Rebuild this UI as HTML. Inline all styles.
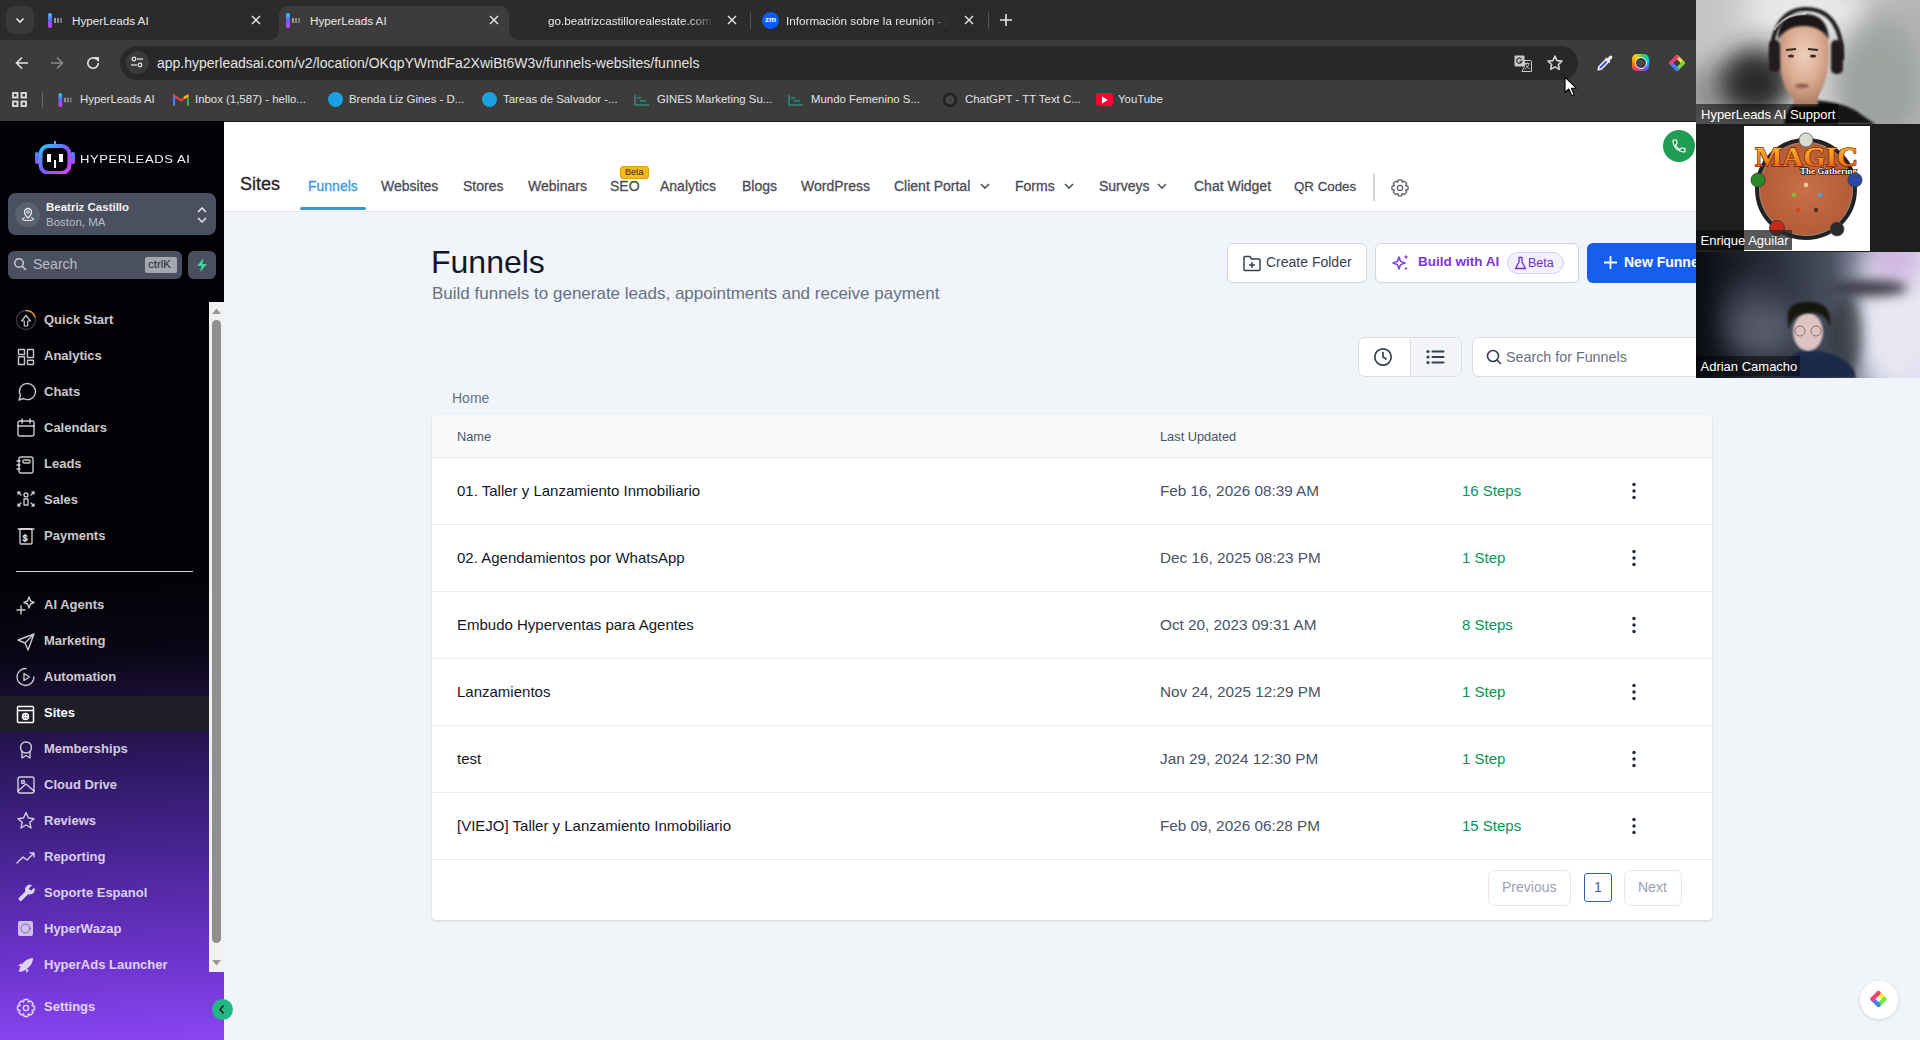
<!DOCTYPE html>
<html><head><meta charset="utf-8">
<style>
*{box-sizing:border-box;margin:0;padding:0}
html,body{width:1920px;height:1040px;overflow:hidden;background:#f1f5f9;font-family:"Liberation Sans",sans-serif}
.a{position:absolute}
.t{position:absolute;white-space:nowrap}
/* chrome */
#strip{position:absolute;left:0;top:0;width:1920px;height:40px;background:#2b2b2b}
#toolbar{position:absolute;left:0;top:40px;width:1920px;height:45px;background:#3c3c3c}
#bm{position:absolute;left:0;top:85px;width:1920px;height:36px;background:#3c3c3c}
.tabtxt{color:#e8e8e8;font-size:11.7px}
.bmt{color:#e3e3e3;font-size:11.4px;top:93px}
/* sidebar */
#side{position:absolute;left:0;top:121px;width:224px;height:919px;
 background:linear-gradient(178deg,#030207 0%,#030207 50%,#0a0616 58%,#1a0f35 63%,#2e1862 70%,#4a2596 80%,#6a32c8 90%,#8a45f2 100%)}
.nav{position:absolute;left:44px;color:rgba(255,255,255,.8);font-size:13px;font-weight:bold;white-space:nowrap}
.ic{position:absolute;left:16px;width:20px;height:20px}
/* header */
#hdr{position:absolute;left:224px;top:121px;width:1472px;height:91px;background:#fff;border-bottom:1px solid #e4e7ec}
.tab{position:absolute;top:178px;font-size:14px;color:#4a4d55;white-space:nowrap;-webkit-text-stroke:0.3px currentColor}
.th{font-size:12.8px;color:#475467}
.rn{font-size:15px;color:#101828}
.rd{font-size:15.3px;color:#475467}
.rs{font-size:15px;color:#079455}
</style></head><body>

<!-- ============ CHROME TAB STRIP ============ -->

<div id="strip"></div>
<!-- dropdown btn -->
<div class="a" style="left:6px;top:6px;width:28px;height:28px;border-radius:8px;background:#383838"></div>
<svg class="a" style="left:14px;top:14px" width="12" height="12" viewBox="0 0 12 12"><path d="M2.5 4.5 L6 8 L9.5 4.5" stroke="#e8e8e8" stroke-width="1.6" fill="none"/></svg>
<!-- tab1 -->
<svg class="a" style="left:47px;top:12px" width="18" height="17" viewBox="0 0 18 17"><defs><linearGradient id="hg" x1="0" y1="0" x2="0" y2="1"><stop offset="0" stop-color="#2ad0ff"/><stop offset=".5" stop-color="#6a5cff"/><stop offset="1" stop-color="#d040ff"/></linearGradient></defs><rect x="1" y="1" width="4" height="15" rx="2" fill="url(#hg)"/><rect x="7" y="6" width="2" height="5" fill="#999"/><rect x="10" y="6" width="2" height="5" fill="#888"/><rect x="13" y="6" width="2" height="5" fill="#777"/></svg>
<div class="t tabtxt" style="left:72px;top:14px">HyperLeads AI</div>
<svg class="a" style="left:251px;top:15px" width="10" height="10" viewBox="0 0 10 10"><path d="M1 1L9 9M9 1L1 9" stroke="#e8e8e8" stroke-width="1.4"/></svg>
<!-- active tab -->
<div class="a" style="left:279px;top:6px;width:230px;height:40px;background:#3c3c3c;border-radius:9px 9px 0 0"></div>
<div class="a" style="left:271px;top:32px;width:8px;height:8px;background:radial-gradient(circle at 0 0,transparent 7.5px,#3c3c3c 8px)"></div><div class="a" style="left:509px;top:32px;width:8px;height:8px;background:radial-gradient(circle at 100% 0,transparent 7.5px,#3c3c3c 8px)"></div>
<svg class="a" style="left:285px;top:12px" width="18" height="17" viewBox="0 0 18 17"><rect x="1" y="1" width="4" height="15" rx="2" fill="url(#hg)"/><rect x="7" y="6" width="2" height="5" fill="#999"/><rect x="10" y="6" width="2" height="5" fill="#888"/><rect x="13" y="6" width="2" height="5" fill="#777"/></svg>
<div class="t tabtxt" style="left:310px;top:14px">HyperLeads AI</div>
<svg class="a" style="left:489px;top:15px" width="10" height="10" viewBox="0 0 10 10"><path d="M1 1L9 9M9 1L1 9" stroke="#e8e8e8" stroke-width="1.4"/></svg>
<!-- tab3 -->
<div class="t tabtxt" style="left:548px;top:14px;width:166px;overflow:hidden;-webkit-mask-image:linear-gradient(90deg,#000 85%,transparent)">go.beatrizcastillorealestate.com</div>
<svg class="a" style="left:727px;top:15px" width="10" height="10" viewBox="0 0 10 10"><path d="M1 1L9 9M9 1L1 9" stroke="#e8e8e8" stroke-width="1.4"/></svg>
<div class="a" style="left:750px;top:12px;width:1px;height:17px;background:#555"></div>
<!-- tab4 zoom -->
<div class="a" style="left:762px;top:12px;width:17px;height:17px;border-radius:50%;background:#0b5cff;color:#fff;font-size:8px;font-weight:bold;line-height:15px;text-align:center">zm</div>
<div class="t tabtxt" style="left:786px;top:14px;width:162px;overflow:hidden;-webkit-mask-image:linear-gradient(90deg,#000 88%,transparent)">Información sobre la reunión - Zoom</div>
<svg class="a" style="left:964px;top:15px" width="10" height="10" viewBox="0 0 10 10"><path d="M1 1L9 9M9 1L1 9" stroke="#e8e8e8" stroke-width="1.4"/></svg>
<div class="a" style="left:988px;top:12px;width:1px;height:17px;background:#555"></div>
<svg class="a" style="left:999px;top:13px" width="14" height="14" viewBox="0 0 14 14"><path d="M7 1V13M1 7H13" stroke="#e8e8e8" stroke-width="1.6"/></svg>

<div id="toolbar"></div>
<!-- nav buttons -->
<svg class="a" style="left:14px;top:55px" width="16" height="16" viewBox="0 0 16 16"><path d="M14 8H2.5M8 2.5L2.5 8L8 13.5" stroke="#e3e3e3" stroke-width="1.6" fill="none"/></svg>
<svg class="a" style="left:49px;top:55px" width="16" height="16" viewBox="0 0 16 16"><path d="M2 8H13.5M8 2.5L13.5 8L8 13.5" stroke="#8a8a8a" stroke-width="1.6" fill="none"/></svg>
<svg class="a" style="left:85px;top:55px" width="16" height="16" viewBox="0 0 16 16"><path d="M13.2 8A5.2 5.2 0 1 1 11.5 4.2" stroke="#e3e3e3" stroke-width="1.6" fill="none"/><path d="M9.5 2.5H13.5V6.5Z" fill="#e3e3e3" stroke="#e3e3e3" stroke-width="1"/></svg>
<!-- omnibox -->
<div class="a" style="left:120px;top:46px;width:1458px;height:34px;border-radius:17px;background:#282828"></div>
<div class="a" style="left:126px;top:51px;width:23px;height:23px;border-radius:50%;background:#3a3a3a"></div>
<svg class="a" style="left:130px;top:55px" width="14" height="14" viewBox="0 0 14 14"><circle cx="4" cy="4" r="1.8" stroke="#e3e3e3" stroke-width="1.3" fill="none"/><path d="M7 4H13" stroke="#e3e3e3" stroke-width="1.3"/><circle cx="10" cy="10" r="1.8" stroke="#e3e3e3" stroke-width="1.3" fill="none"/><path d="M1 10H7" stroke="#e3e3e3" stroke-width="1.3"/></svg>
<div class="t" style="left:157px;top:55px;font-size:14px;color:#e3e3e3">app.hyperleadsai.com/v2/location/OKqpYWmdFa2XwiBt6W3v/funnels-websites/funnels</div>
<!-- translate -->
<svg class="a" style="left:1514px;top:55px" width="18" height="17" viewBox="0 0 18 17"><rect x="0.5" y="0.5" width="10" height="11" rx="1" fill="#c8c8c8"/><path d="M7.5 4.3A2.6 2.6 0 1 0 7.8 6.5H5.6" fill="none" stroke="#3a3a3a" stroke-width="1.3"/><path d="M10.5 5.5H16.5A1 1 0 0 1 17.5 6.5V16.5H8L10.5 11.5Z" fill="#282828" stroke="#c8c8c8" stroke-width="1"/><path d="M11 8.5H15.5M13.2 7.5V9M11.8 9C12.5 11.5 14 13 15.8 14M14.8 9C14.2 11.5 13 13 11.2 14" stroke="#c8c8c8" stroke-width=".9" fill="none"/></svg>
<svg class="a" style="left:1546px;top:54px" width="18" height="18" viewBox="0 0 24 24"><path d="M12 2.8l2.8 6 6.5.7-4.8 4.5 1.3 6.5L12 17.2l-5.8 3.3 1.3-6.5-4.8-4.5 6.5-.7z" stroke="#cfcfcf" stroke-width="2.2" fill="none" stroke-linejoin="round"/></svg>
<!-- extensions -->
<svg class="a" style="left:1596px;top:54px" width="18" height="18" viewBox="0 0 18 18"><path d="M2.2 15.8L3 12.5L10.2 5.3L12.7 7.8L5.5 15Z" fill="#4a4ad0" stroke="#f0f0f0" stroke-width="1.5" stroke-linejoin="round"/><path d="M9.6 4.2L13.8 8.4" stroke="#f0f0f0" stroke-width="2"/><path d="M11.8 6.2L14.8 3.2" stroke="#f0f0f0" stroke-width="3.2" stroke-linecap="round"/></svg>
<div class="a" style="left:1632px;top:54px;width:17px;height:17px;border-radius:5px;background:conic-gradient(from 200deg,#ff2d8a,#ff7a00,#ffd400,#34d058,#00c6ff,#6a4cff,#ff2d8a)"></div>
<div class="a" style="left:1634.5px;top:56.5px;width:12px;height:12px;border-radius:50%;background:#3c3c3c;border:1.3px solid #fff"></div>
<div class="a" style="left:1637.5px;top:59.5px;width:6px;height:6px;border-radius:50%;background:#4a4a4a"></div>
<svg class="a" style="left:1668px;top:54px" width="18" height="18" viewBox="0 0 18 18" stroke-width="3.6" stroke-linecap="round"><path d="M9 2.8L15.2 9" stroke="#e8e040"/><path d="M15.2 9L9 15.2" stroke="#7ad040"/><path d="M9 15.2L2.8 9" stroke="#4a7ef0"/><path d="M2.8 9L9 2.8" stroke="#f04070"/></svg>
<div id="bm"></div>
<svg class="a" style="left:12px;top:92px" width="15" height="15" viewBox="0 0 15 15"><g fill="none" stroke="#e3e3e3" stroke-width="1.8"><rect x="1" y="1" width="4.5" height="4.5"/><rect x="9.5" y="1" width="4.5" height="4.5"/><rect x="1" y="9.5" width="4.5" height="4.5"/><rect x="9.5" y="9.5" width="4.5" height="4.5"/></g></svg>
<div class="a" style="left:42px;top:92px;width:1px;height:16px;background:#6a6a6a"></div>
<svg class="a" style="left:57px;top:92px" width="18" height="16" viewBox="0 0 18 17"><rect x="1" y="1" width="4" height="15" rx="2" fill="url(#hg)"/><rect x="7" y="6" width="2" height="5" fill="#999"/><rect x="10" y="6" width="2" height="5" fill="#888"/><rect x="13" y="6" width="2" height="5" fill="#777"/></svg>
<div class="t bmt" style="left:80px">HyperLeads AI</div>
<svg class="a" style="left:173px;top:93px" width="16" height="13" viewBox="0 0 16 12"><path d="M1 12V2L8 7L15 2V12" fill="none" stroke="#ea4335" stroke-width="2.2"/><path d="M1 12V3" stroke="#4285f4" stroke-width="2.2"/><path d="M15 12V3" stroke="#34a853" stroke-width="2.2"/><path d="M11 4.5L15 2" stroke="#fbbc04" stroke-width="2.2"/></svg>
<div class="t bmt" style="left:195px">Inbox (1,587) - hello...</div>
<div class="a" style="left:328px;top:92px;width:15px;height:15px;border-radius:50%;background:#1ba1e2"></div>
<div class="t bmt" style="left:349px">Brenda Liz Gines - D...</div>
<div class="a" style="left:482px;top:92px;width:15px;height:15px;border-radius:50%;background:#1ba1e2"></div>
<div class="t bmt" style="left:503px">Tareas de Salvador -...</div>
<svg class="a" style="left:634px;top:94px" width="16" height="12" viewBox="0 0 16 12"><path d="M1 1V11H15M3 4H7M6 7H12" stroke="#2e8b7a" stroke-width="1.5" fill="none"/></svg>
<div class="t bmt" style="left:657px">GINES Marketing Su...</div>
<svg class="a" style="left:788px;top:94px" width="16" height="12" viewBox="0 0 16 12"><path d="M1 1V11H15M3 4H7M6 7H12" stroke="#2e8b7a" stroke-width="1.5" fill="none"/></svg>
<div class="t bmt" style="left:811px">Mundo Femenino S...</div>
<svg class="a" style="left:942px;top:92px" width="16" height="16" viewBox="0 0 16 16"><circle cx="8" cy="8" r="6" fill="none" stroke="#222" stroke-width="2.5"/><circle cx="8" cy="8" r="3" fill="none" stroke="#555" stroke-width="1"/></svg>
<div class="t bmt" style="left:965px">ChatGPT - TT Text C...</div>
<div class="a" style="left:1096px;top:93px;width:17px;height:13px;border-radius:3px;background:#ff0033"></div>
<svg class="a" style="left:1101px;top:96px" width="8" height="8" viewBox="0 0 8 8"><path d="M1 0.5L7 4L1 7.5Z" fill="#fff"/></svg>
<div class="t bmt" style="left:1118px">YouTube</div>


<!-- ============ SIDEBAR ============ -->

<div id="side"></div>
<!-- logo -->
<svg class="a" style="left:34px;top:141px" width="42" height="33" viewBox="0 0 42 33"><defs><linearGradient id="lg" x1="0" y1="0" x2="1" y2="1"><stop offset="0" stop-color="#28c8ff"/><stop offset=".5" stop-color="#7a5cff"/><stop offset="1" stop-color="#e040ff"/></linearGradient></defs>
<rect x="20" y="0" width="2" height="5" fill="#4aa8ff"/><rect x="1" y="11" width="4" height="12" rx="2" fill="url(#lg)"/><rect x="37" y="11" width="4" height="12" rx="2" fill="url(#lg)"/>
<rect x="6.5" y="5" width="29" height="27" rx="8" fill="none" stroke="url(#lg)" stroke-width="4"/>
<rect x="13" y="13" width="4" height="8" fill="#fff"/><rect x="25" y="13" width="4" height="8" fill="#fff"/><rect x="20" y="19" width="2" height="8" fill="#fff"/></svg>
<div class="t" style="left:80px;top:151px;font-size:13px;letter-spacing:0.6px;color:#f0f0f0;font-weight:normal;transform:scaleY(0.9)">HYPERLEADS AI</div>
<!-- location switcher -->
<div class="a" style="left:8px;top:193px;width:208px;height:42px;border-radius:8px;background:#4a5060"></div>
<div class="a" style="left:15px;top:202px;width:25px;height:25px;border-radius:50%;background:#5b6170"></div>
<svg class="a" style="left:20px;top:206px" width="16" height="16" viewBox="0 0 16 16"><path d="M8 12C8 12 4.5 8.5 4.5 6A3.5 3.5 0 0 1 11.5 6C11.5 8.5 8 12 8 12Z" fill="none" stroke="#e5e7eb" stroke-width="1.3"/><circle cx="8" cy="6" r="1.2" fill="none" stroke="#e5e7eb" stroke-width="1.1"/><path d="M5 11.5C3 12 2.5 12.6 2.5 13C2.5 14 5 14.5 8 14.5S13.5 14 13.5 13C13.5 12.6 13 12 11 11.5" fill="none" stroke="#e5e7eb" stroke-width="1.2"/></svg>
<div class="t" style="left:46px;top:201px;font-size:11.5px;font-weight:bold;color:#f3f4f6">Beatriz Castillo</div>
<div class="t" style="left:46px;top:216px;font-size:11.5px;color:#b9bdc6">Boston, MA</div>
<svg class="a" style="left:196px;top:205px" width="12" height="20" viewBox="0 0 12 20"><path d="M2 7L6 3L10 7M2 13L6 17L10 13" stroke="#e5e7eb" stroke-width="1.5" fill="none"/></svg>
<!-- search -->
<div class="a" style="left:8px;top:251px;width:174px;height:28px;border-radius:6px;background:#4a5060"></div>
<svg class="a" style="left:13px;top:257px" width="15" height="15" viewBox="0 0 15 15"><circle cx="6" cy="6" r="4.3" fill="none" stroke="#c9ccd3" stroke-width="1.5"/><path d="M9.2 9.2L13 13" stroke="#c9ccd3" stroke-width="1.6"/></svg>
<div class="t" style="left:33px;top:256px;font-size:14px;color:#b9bdc6">Search</div>
<div class="a" style="left:145px;top:257px;width:32px;height:16px;border-radius:2px;background:#a4a8b0"></div>
<div class="t" style="left:148px;top:258px;font-size:11.5px;color:#1f2937">ctrlK</div>
<div class="a" style="left:188px;top:251px;width:28px;height:28px;border-radius:6px;background:#4a5060"></div>
<svg class="a" style="left:195px;top:257px" width="14" height="16" viewBox="0 0 14 16"><path d="M8.5 1L2 9H6.5L5 15L12 7H7.5Z" fill="#37d69a"/></svg>
<!-- scrollbar -->
<div class="a" style="left:209px;top:302px;width:15px;height:670px;background:#f1f1f1"></div>
<div class="a" style="left:212px;top:320px;width:9px;height:623px;border-radius:5px;background:#8f8f8f"></div>
<svg class="a" style="left:211px;top:307px" width="11" height="8" viewBox="0 0 11 8"><path d="M1 7L5.5 1.5L10 7Z" fill="#9a9a9a"/></svg>
<svg class="a" style="left:211px;top:959px" width="11" height="8" viewBox="0 0 11 8"><path d="M1 1L5.5 6.5L10 1Z" fill="#9a9a9a"/></svg>
<!-- active band -->
<div class="a" style="left:0;top:696px;width:209px;height:35px;background:#1d1e26"></div>
<!-- divider -->
<div class="a" style="left:16px;top:571px;width:177px;height:1px;background:#d8d8d8"></div>
<!-- nav items -->
<div class="nav" style="top:312px">Quick Start</div>
<div class="nav" style="top:348px">Analytics</div>
<div class="nav" style="top:384px">Chats</div>
<div class="nav" style="top:420px">Calendars</div>
<div class="nav" style="top:456px">Leads</div>
<div class="nav" style="top:492px">Sales</div>
<div class="nav" style="top:528px">Payments</div>
<div class="nav" style="top:597px">AI Agents</div>
<div class="nav" style="top:633px">Marketing</div>
<div class="nav" style="top:669px">Automation</div>
<div class="nav" style="top:705px;color:#fff">Sites</div>
<div class="nav" style="top:741px">Memberships</div>
<div class="nav" style="top:777px">Cloud Drive</div>
<div class="nav" style="top:813px">Reviews</div>
<div class="nav" style="top:849px">Reporting</div>
<div class="nav" style="top:885px">Soporte Espanol</div>
<div class="nav" style="top:921px">HyperWazap</div>
<div class="nav" style="top:957px">HyperAds Launcher</div>
<div class="nav" style="top:999px">Settings</div>
<!-- nav icons -->
<svg class="a" style="left:0;top:300px" width="44" height="740" viewBox="0 300 44 740" fill="none" stroke="rgba(255,255,255,.78)" stroke-width="1.4" stroke-linecap="round" stroke-linejoin="round">
 <!-- quick start -->
 <circle cx="26" cy="320" r="9.5" stroke="#3a3a3a"/><path d="M26 310.5A9.5 9.5 0 0 1 35 317" stroke="#e08a3a"/><path d="M24.3 326V321H21.5L26 315.5L30.5 321H27.7V326Z" stroke-width="1.2"/>
 <!-- analytics -->
 <rect x="18.5" y="349.5" width="6" height="5" rx=".3"/><rect x="27.5" y="349.5" width="6" height="8" rx=".3"/><rect x="18.5" y="356.8" width="6" height="7.7" rx=".3"/><rect x="27.5" y="360.3" width="6" height="4.2" rx=".3"/>
 <!-- chats -->
 <path d="M19 400L20.5 395.5A8 8 0 1 1 23.5 398.5Z"/>
 <!-- calendars -->
 <rect x="18" y="421" width="16" height="15" rx="2"/><path d="M18 426H34M22 419V423M30 419V423"/>
 <!-- leads -->
 <rect x="19" y="457" width="14" height="16" rx="2"/><rect x="23" y="460" width="7" height="3" rx="1"/><path d="M17 461H20M17 465H20M17 469H20"/>
 <!-- sales -->
 <circle cx="26" cy="495" r="2"/><path d="M24 499H28V505H24Z"/><path d="M18 494V492H20M34 494V492H32M18 504V506H20M34 504V506H32M19 493L21 495M33 493L31 495M19 505L21 503M33 505L31 503"/>
 <!-- payments -->
 <path d="M18 529H34"/><rect x="20" y="529" width="12" height="15" rx="1"/><text x="22.5" y="541" font-size="9" stroke-width=".5" fill="rgba(255,255,255,.78)" font-family="Liberation Sans">$</text>
 <!-- ai agents -->
 <path d="M29 597L30.5 601L34 602.5L30.5 604L29 608L27.5 604L24 602.5L27.5 601Z"/><path d="M21 606V614M17 610H25"/>
 <!-- marketing -->
 <path d="M18 640L34 634L28 650L25 643Z M25 643L34 634"/>
 <!-- automation -->
 <path d="M34 677A8.5 8.5 0 1 1 26 668.5"/><path d="M24 673.5L29.5 677L24 680.5Z"/>
 <!-- memberships -->
 <path d="M26 742A5.5 5.5 0 1 1 26 753A5.5 5.5 0 1 1 26 742Z"/><path d="M22 752L22 758L26 755.5L30 758L30 752"/>
 <!-- cloud drive -->
 <rect x="18" y="777" width="16" height="16" rx="2"/><circle cx="23" cy="782" r="1.5"/><path d="M18 791L26 784L34 791"/>
 <!-- reviews -->
 <path d="M26 812.5L28.5 818L34 818.6L29.8 822.3L31 828L26 825L21 828L22.2 822.3L18 818.6L23.5 818Z"/>
 <!-- reporting -->
 <path d="M17 863L23 857L27 860L34 853M30 853H34V857"/>
 <!-- soporte (wrench) -->
 <g transform="translate(35.5 884) scale(-0.75 0.75)"><path d="M22.7 19l-9.1-9.1c.9-2.3.4-5-1.5-6.9-2-2-5-2.4-7.4-1.3L9 6 6 9 1.6 4.7C.4 7.1.9 10.1 2.9 12.1c1.9 1.9 4.6 2.4 6.9 1.5l9.1 9.1c.4.4 1 .4 1.4 0l2.3-2.3c.5-.4.5-1.1.1-1.4z" fill="rgba(255,255,255,.8)" stroke="none" transform="rotate(0)"/></g>
 <!-- hyperwazap -->
 <rect x="18" y="921" width="15" height="15" rx="2" fill="rgba(255,255,255,.7)" stroke="none"/><circle cx="25.5" cy="928.5" r="4.5" stroke="rgba(90,40,180,.6)" stroke-width="1"/>
 <!-- rocket -->
 <path d="M19 972C19 968 22 964 24 962C27 959 31 958 33 958C33 961 32 964 29 967C27 969 23 972 19 972Z" fill="rgba(255,255,255,.78)" stroke="none"/><path d="M22 966L18 966L21 963M26 969L26 973L29 970" fill="rgba(255,255,255,.78)" stroke="none"/>
 <!-- settings -->
 <circle cx="26" cy="1008" r="2.6"/><path d="M24.2 999.5H27.8L28.4 1002L30.6 1000.9L33.1 1003.4L32 1005.6L34.5 1006.2V1009.8L32 1010.4L33.1 1012.6L30.6 1015.1L28.4 1014L27.8 1016.5H24.2L23.6 1014L21.4 1015.1L18.9 1012.6L20 1010.4L17.5 1009.8V1006.2L20 1005.6L18.9 1003.4L21.4 1000.9L23.6 1002Z"/>
</svg>
<!-- sites icon white -->
<svg class="a" style="left:16px;top:705px" width="20" height="20" viewBox="0 0 20 20" fill="none" stroke="#fff" stroke-width="1.5"><rect x="1.5" y="1.5" width="16" height="16" rx="1"/><path d="M1.5 5.5H17.5"/><circle cx="9.5" cy="11.5" r="3"/><path d="M6.5 11.5H12.5M9.5 8.5V14.5"/></svg>
<!-- collapse btn -->
<div class="a" style="left:212px;top:999px;width:21px;height:21px;border-radius:50%;background:#23b883"></div>
<svg class="a" style="left:217px;top:1004px" width="10" height="11" viewBox="0 0 10 11"><path d="M6.5 1.5L3 5.5L6.5 9.5" stroke="#1a1a1a" stroke-width="1.5" fill="none"/></svg>


<!-- ============ HEADER ============ -->

<div id="hdr"></div>
<div class="a" style="left:224px;top:121px;width:1472px;height:1px;background:#1a1a1a"></div>
<div class="t" style="left:240px;top:174px;font-size:18px;color:#1f2328;-webkit-text-stroke:0.3px currentColor">Sites</div>
<div class="tab" style="left:308px;color:#3b9ad6">Funnels</div>
<div class="a" style="left:300px;top:207px;width:66px;height:3px;border-radius:2px;background:#3b95cf"></div>
<div class="tab" style="left:381px">Websites</div>
<div class="tab" style="left:463px">Stores</div>
<div class="tab" style="left:528px">Webinars</div>
<div class="tab" style="left:610px">SEO</div>
<div class="a" style="left:620px;top:166px;width:29px;height:13px;border-radius:3px;background:#f8b820;border:1px solid #e59c00"></div>
<div class="t" style="left:625px;top:166.5px;font-size:9px;color:#3a2a00">Beta</div>
<div class="tab" style="left:660px">Analytics</div>
<div class="tab" style="left:742px">Blogs</div>
<div class="tab" style="left:801px">WordPress</div>
<div class="tab" style="left:894px">Client Portal</div>
<svg class="a" style="left:979px;top:180px" width="12" height="12" viewBox="0 0 12 12"><path d="M2 4L6 8L10 4" stroke="#4b5563" stroke-width="1.6" fill="none"/></svg>
<div class="tab" style="left:1015px">Forms</div>
<svg class="a" style="left:1063px;top:180px" width="12" height="12" viewBox="0 0 12 12"><path d="M2 4L6 8L10 4" stroke="#4b5563" stroke-width="1.6" fill="none"/></svg>
<div class="tab" style="left:1099px">Surveys</div>
<svg class="a" style="left:1156px;top:180px" width="12" height="12" viewBox="0 0 12 12"><path d="M2 4L6 8L10 4" stroke="#4b5563" stroke-width="1.6" fill="none"/></svg>
<div class="tab" style="left:1194px">Chat Widget</div>
<div class="tab" style="left:1294px;font-size:13.3px;top:178.5px">QR Codes</div>
<div class="a" style="left:1373px;top:173px;width:1.5px;height:28px;background:#d4d4d4"></div>
<svg class="a" style="left:1389.5px;top:177.5px" width="20" height="20" viewBox="0 0 20 20" fill="none" stroke="#5a5d63" stroke-width="1.3" stroke-linejoin="round"><circle cx="10" cy="10" r="2.6"/><path d="M8.3 1.8H11.7L12.2 4.1L14.3 3.1L16.7 5.5L15.7 7.6L18 8.1V11.5L15.7 12L16.7 14.1L14.3 16.5L12.2 15.5L11.7 17.8H8.3L7.8 15.5L5.7 16.5L3.3 14.1L4.3 12L2 11.5V8.1L4.3 7.6L3.3 5.5L5.7 3.1L7.8 4.1Z"/></svg>
<!-- phone -->
<div class="a" style="left:1663px;top:130px;width:32px;height:32px;border-radius:50%;background:#1f9d55"></div>
<svg class="a" style="left:1671px;top:138px" width="16" height="16" viewBox="0 0 24 24"><path d="M6.6 10.8c1.4 2.8 3.8 5.1 6.6 6.6l2.2-2.2c.3-.3.7-.4 1-.2 1.1.4 2.3.6 3.6.6.6 0 1 .4 1 1V20c0 .6-.4 1-1 1C10.6 21 3 13.4 3 4c0-.6.4-1 1-1h3.5c.6 0 1 .4 1 1 0 1.3.2 2.5.6 3.6.1.3 0 .7-.2 1z" fill="none" stroke="#fff" stroke-width="1.8"/></svg>

<!-- ============ CONTENT ============ -->
<div class="t" style="left:431px;top:244px;font-size:32px;color:#101828">Funnels</div>
<div class="t" style="left:432px;top:284px;font-size:17px;color:#667085">Build funnels to generate leads, appointments and receive payment</div>
<!-- create folder -->
<div class="a" style="left:1227px;top:243px;width:140px;height:40px;border-radius:6px;background:#fff;border:1px solid #d0d5dd"></div>
<svg class="a" style="left:1242px;top:253px" width="20" height="20" viewBox="0 0 20 20" fill="none" stroke="#344054" stroke-width="1.5" stroke-linejoin="round"><path d="M2 5V16.5A1 1 0 0 0 3 17.5H17A1 1 0 0 0 18 16.5V7A1 1 0 0 0 17 6H9.5L8 3.5H3A1 1 0 0 0 2 4.5Z"/><path d="M10 9V15M7 12H13"/></svg>
<div class="t" style="left:1266px;top:254px;font-size:14px;color:#344054">Create Folder</div>
<!-- build with ai -->
<div class="a" style="left:1375px;top:243px;width:204px;height:40px;border-radius:6px;background:#fff;border:1px solid #d0d5dd"></div>
<svg class="a" style="left:1390px;top:252px" width="22" height="22" viewBox="0 0 22 22" fill="none" stroke="#7f3ee0" stroke-width="1.5" stroke-linejoin="round"><path d="M9 5L10.6 9.4L15 11L10.6 12.6L9 17L7.4 12.6L3 11L7.4 9.4Z"/><path d="M16 2.5L16.7 4.3L18.5 5L16.7 5.7L16 7.5L15.3 5.7L13.5 5L15.3 4.3Z" fill="#7f3ee0" stroke="none"/><path d="M16 14.5L16.6 16L18 16.5L16.6 17L16 18.5L15.4 17L14 16.5L15.4 16Z" fill="#7f3ee0" stroke="none"/></svg>
<div class="t" style="left:1418px;top:254px;font-size:13.5px;font-weight:bold;color:#7b35d9">Build with AI</div>
<div class="a" style="left:1507px;top:252px;width:57px;height:22px;border-radius:11px;background:#f4f0fd;border:1px solid #d9ccf5"></div>
<svg class="a" style="left:1514px;top:256px" width="13" height="14" viewBox="0 0 13 14" fill="none" stroke="#6b2fd0" stroke-width="1.3" stroke-linejoin="round"><path d="M4.5 1.5H8.5M5 1.5V6L1.5 12.5H11.5L8 6V1.5"/></svg>
<div class="t" style="left:1528px;top:256px;font-size:12.5px;color:#6b2fd0">Beta</div>
<!-- new funnel -->
<div class="a" style="left:1587px;top:243px;width:140px;height:40px;border-radius:6px;background:#155eef"></div>
<svg class="a" style="left:1602px;top:254px" width="17" height="17" viewBox="0 0 17 17"><path d="M8.5 2V15M2 8.5H15" stroke="#fff" stroke-width="1.8"/></svg>
<div class="t" style="left:1624px;top:254px;font-size:14px;font-weight:bold;color:#fff">New Funnel</div>
<!-- view toggle -->
<div class="a" style="left:1358px;top:337px;width:104px;height:40px;border-radius:7px;background:#fff;border:1px solid #d9dde3;overflow:hidden"><div class="a" style="left:51px;top:0;width:53px;height:40px;background:#f2f4f7;border-left:1px solid #d9dde3"></div></div>
<svg class="a" style="left:1373px;top:347px" width="20" height="20" viewBox="0 0 20 20" fill="none" stroke="#344054" stroke-width="1.7" stroke-linecap="round"><circle cx="10" cy="10" r="8.2"/><path d="M10 5.5V10L13 12"/></svg>
<svg class="a" style="left:1426px;top:349px" width="19" height="16" viewBox="0 0 19 16"><g fill="#344054"><circle cx="2" cy="2.5" r="1.6"/><circle cx="2" cy="8" r="1.6"/><circle cx="2" cy="13.5" r="1.6"/><rect x="5.5" y="1.6" width="13" height="1.8" rx=".9"/><rect x="5.5" y="7.1" width="13" height="1.8" rx=".9"/><rect x="5.5" y="12.6" width="13" height="1.8" rx=".9"/></g></svg>
<!-- search funnels -->
<div class="a" style="left:1472px;top:337px;width:260px;height:40px;border-radius:7px;background:#fff;border:1px solid #d9dde3"></div>
<svg class="a" style="left:1486px;top:349px" width="16" height="16" viewBox="0 0 16 16" fill="none" stroke="#344054" stroke-width="1.6" stroke-linecap="round"><circle cx="7" cy="7" r="5.5"/><path d="M11 11L14.5 14.5"/></svg>
<div class="t" style="left:1506px;top:349px;font-size:14.3px;color:#667085">Search for Funnels</div>
<!-- breadcrumb -->
<div class="t" style="left:452px;top:390px;font-size:14px;color:#667085">Home</div>
<!-- table card -->
<div class="a" style="left:432px;top:415px;width:1280px;height:505px;border-radius:4px;background:#fff;box-shadow:0 1px 3px rgba(16,24,40,.1),0 1px 2px rgba(16,24,40,.06);overflow:hidden">
 <div class="a" style="left:0;top:0;width:1280px;height:43px;background:#f9fafb;border-bottom:1px solid #eaecf0"></div>
 <div class="a" style="left:0;top:109px;width:1280px;height:1px;background:#eaecf0"></div>
 <div class="a" style="left:0;top:176px;width:1280px;height:1px;background:#eaecf0"></div>
 <div class="a" style="left:0;top:243px;width:1280px;height:1px;background:#eaecf0"></div>
 <div class="a" style="left:0;top:310px;width:1280px;height:1px;background:#eaecf0"></div>
 <div class="a" style="left:0;top:377px;width:1280px;height:1px;background:#eaecf0"></div>
 <div class="a" style="left:0;top:444px;width:1280px;height:1px;background:#eaecf0"></div>
</div>
<div class="t th" style="left:457px;top:429px">Name</div>
<div class="t th" style="left:1160px;top:429px">Last Updated</div>
<div class="t rn" style="left:457px;top:482px">01. Taller y Lanzamiento Inmobiliario</div>
<div class="t rd" style="left:1160px;top:482px">Feb 16, 2026 08:39 AM</div>
<div class="t rs" style="left:1462px;top:482px">16 Steps</div>
<svg class="a" style="left:1630px;top:482px" width="8" height="18" viewBox="0 0 8 18"><g fill="#1d2939"><circle cx="4" cy="2.5" r="1.7"/><circle cx="4" cy="9" r="1.7"/><circle cx="4" cy="15.5" r="1.7"/></g></svg>
<div class="t rn" style="left:457px;top:549px">02. Agendamientos por WhatsApp</div>
<div class="t rd" style="left:1160px;top:549px">Dec 16, 2025 08:23 PM</div>
<div class="t rs" style="left:1462px;top:549px">1 Step</div>
<svg class="a" style="left:1630px;top:549px" width="8" height="18" viewBox="0 0 8 18"><g fill="#1d2939"><circle cx="4" cy="2.5" r="1.7"/><circle cx="4" cy="9" r="1.7"/><circle cx="4" cy="15.5" r="1.7"/></g></svg>
<div class="t rn" style="left:457px;top:616px">Embudo Hyperventas para Agentes</div>
<div class="t rd" style="left:1160px;top:616px">Oct 20, 2023 09:31 AM</div>
<div class="t rs" style="left:1462px;top:616px">8 Steps</div>
<svg class="a" style="left:1630px;top:616px" width="8" height="18" viewBox="0 0 8 18"><g fill="#1d2939"><circle cx="4" cy="2.5" r="1.7"/><circle cx="4" cy="9" r="1.7"/><circle cx="4" cy="15.5" r="1.7"/></g></svg>
<div class="t rn" style="left:457px;top:683px">Lanzamientos</div>
<div class="t rd" style="left:1160px;top:683px">Nov 24, 2025 12:29 PM</div>
<div class="t rs" style="left:1462px;top:683px">1 Step</div>
<svg class="a" style="left:1630px;top:683px" width="8" height="18" viewBox="0 0 8 18"><g fill="#1d2939"><circle cx="4" cy="2.5" r="1.7"/><circle cx="4" cy="9" r="1.7"/><circle cx="4" cy="15.5" r="1.7"/></g></svg>
<div class="t rn" style="left:457px;top:750px">test</div>
<div class="t rd" style="left:1160px;top:750px">Jan 29, 2024 12:30 PM</div>
<div class="t rs" style="left:1462px;top:750px">1 Step</div>
<svg class="a" style="left:1630px;top:750px" width="8" height="18" viewBox="0 0 8 18"><g fill="#1d2939"><circle cx="4" cy="2.5" r="1.7"/><circle cx="4" cy="9" r="1.7"/><circle cx="4" cy="15.5" r="1.7"/></g></svg>
<div class="t rn" style="left:457px;top:817px">[VIEJO] Taller y Lanzamiento Inmobiliario</div>
<div class="t rd" style="left:1160px;top:817px">Feb 09, 2026 06:28 PM</div>
<div class="t rs" style="left:1462px;top:817px">15 Steps</div>
<svg class="a" style="left:1630px;top:817px" width="8" height="18" viewBox="0 0 8 18"><g fill="#1d2939"><circle cx="4" cy="2.5" r="1.7"/><circle cx="4" cy="9" r="1.7"/><circle cx="4" cy="15.5" r="1.7"/></g></svg>

<!-- pagination -->
<div class="a" style="left:1488px;top:870px;width:83px;height:36px;border-radius:6px;border:1px solid #e4e7ec;background:#fff"></div>
<div class="t" style="left:1502px;top:879px;font-size:14px;color:#98a2b3">Previous</div>
<div class="a" style="left:1584px;top:873px;width:28px;height:29px;border-radius:3px;border:1.5px solid #2f5fb3;background:#fff"></div>
<div class="t" style="left:1594px;top:879px;font-size:14px;color:#2f5fb3">1</div>
<div class="a" style="left:1624px;top:870px;width:58px;height:36px;border-radius:6px;border:1px solid #e4e7ec;background:#fff"></div>
<div class="t" style="left:1638px;top:879px;font-size:14px;color:#98a2b3">Next</div>
<!-- floating -->
<div class="a" style="left:1860px;top:981px;width:38px;height:38px;border-radius:50%;background:#fff;box-shadow:0 1px 4px rgba(0,0,0,.12)"></div>
<svg class="a" style="left:1867px;top:988px" width="24" height="24" viewBox="0 0 24 24" stroke-width="4.2" stroke-linecap="round"><path d="M11.5 5L17.5 11" stroke="#f5ef3a"/><path d="M17.5 11L11.5 17" stroke="#6ee84a"/><path d="M11.5 17L5.5 11" stroke="#4a80f0"/><path d="M5.5 11L11.5 5" stroke="#f54070"/></svg>



<!-- ============ VIDEO PANELS ============ -->
<svg class="a" style="left:1696px;top:0" width="224" height="378" viewBox="0 0 224 378">
<defs>
 <filter id="b2" filterUnits="userSpaceOnUse" x="-100" y="-100" width="424" height="578"><feGaussianBlur stdDeviation="2"/></filter>
 <filter id="b1" filterUnits="userSpaceOnUse" x="-100" y="-100" width="424" height="578"><feGaussianBlur stdDeviation="1"/></filter>
 <filter id="b6" filterUnits="userSpaceOnUse" x="-100" y="-100" width="424" height="578"><feGaussianBlur stdDeviation="6"/></filter>
 <filter id="b12" filterUnits="userSpaceOnUse" x="-100" y="-100" width="424" height="578"><feGaussianBlur stdDeviation="12"/></filter>
 <linearGradient id="p1bg" x1="0" y1="0" x2="1" y2="0"><stop offset="0" stop-color="#c2c4c2"/><stop offset=".45" stop-color="#d8dad8"/><stop offset="1" stop-color="#b4b6b4"/></linearGradient>
 <radialGradient id="skin" cx=".5" cy=".4" r=".65"><stop offset="0" stop-color="#f0d0bc"/><stop offset=".6" stop-color="#d8a88e"/><stop offset="1" stop-color="#a87862"/></radialGradient>
 <radialGradient id="mtg" cx=".5" cy=".5" r=".5"><stop offset="0" stop-color="#c8704a"/><stop offset="1" stop-color="#b45a36"/></radialGradient>
 <linearGradient id="mtxt" x1="0" y1="0" x2="0" y2="1"><stop offset="0" stop-color="#ffc830"/><stop offset=".6" stop-color="#f08a18"/><stop offset="1" stop-color="#d84810"/></linearGradient>
 <linearGradient id="p3bg" x1="0" y1="0" x2="1" y2="0"><stop offset="0" stop-color="#0a0c12"/><stop offset=".35" stop-color="#2a2f3c"/><stop offset=".6" stop-color="#4a5060"/><stop offset=".8" stop-color="#a8acc0"/><stop offset="1" stop-color="#dcdcf0"/></linearGradient>
 <clipPath id="c1"><rect x="0" y="0" width="224" height="124"/></clipPath>
 <clipPath id="c3"><rect x="0" y="252" width="224" height="126"/></clipPath>
</defs>
<!-- panel 1 -->
<g clip-path="url(#c1)">
 <rect x="0" y="0" width="224" height="124" fill="url(#p1bg)"/>
 <ellipse cx="110" cy="10" rx="60" ry="25" fill="#e8eae8" filter="url(#b12)"/>
 <ellipse cx="190" cy="70" rx="35" ry="60" fill="#a4a8a4" filter="url(#b12)"/>
 <ellipse cx="20" cy="95" rx="40" ry="30" fill="#9a9a9a" filter="url(#b12)"/>
 <ellipse cx="60" cy="82" rx="36" ry="34" fill="#2a2a2a" filter="url(#b12)"/><ellipse cx="180" cy="90" rx="40" ry="50" fill="#9ea29e" filter="url(#b12)"/>
 <path d="M88 124C90 108 100 100 112 100C130 100 150 104 162 112C170 118 176 122 180 124Z" fill="#141414" filter="url(#b1)"/>
 <rect x="98" y="88" width="24" height="18" fill="#b08068" filter="url(#b1)"/>
 <path d="M83 50C83 30 94 22 108 22C122 22 133 30 133 50C133 72 128 92 118 100C112 104 104 104 98 100C88 92 83 72 83 50Z" fill="url(#skin)" filter="url(#b1)"/>
 <path d="M82 40C82 18 94 14 108 14C124 14 132 22 133 40C128 30 118 26 108 26C96 26 88 30 82 40Z" fill="#1a1614" filter="url(#b1)"/>
 <path d="M76 60C74 28 88 9 110 9C134 9 147 28 146 60" fill="none" stroke="#1a1818" stroke-width="4" filter="url(#b1)"/>
 <path d="M78 30C86 18 96 14 110 14" fill="none" stroke="#eee" stroke-width="2" opacity=".6"/>
 <rect x="73" y="40" width="11" height="32" rx="5" fill="#221a1c" filter="url(#b1)"/>
 <rect x="135" y="40" width="12" height="34" rx="5" fill="#221a1c" filter="url(#b1)"/>
 <path d="M90 50L100 49M112 49L122 50" stroke="#3a2a22" stroke-width="1.8"/>
 <ellipse cx="95" cy="56" rx="3" ry="1.6" fill="#3a2820"/><ellipse cx="117" cy="56" rx="3" ry="1.6" fill="#3a2820"/>
 <ellipse cx="106" cy="86" rx="7" ry="2.5" fill="#9a6055" filter="url(#b1)"/>
 <rect x="0" y="104" width="142" height="20" fill="rgba(0,0,0,.55)"/>
 <text x="5" y="118.5" font-family="Liberation Sans" font-size="13" fill="#fff">HyperLeads AI Support</text>
</g>
<!-- panel 2 -->
<rect x="0" y="124" width="224" height="128" fill="#1e1e1e"/>
<rect x="48" y="126" width="126" height="125" fill="#fff"/>
<circle cx="110" cy="189" r="49" fill="url(#mtg)" stroke="#222" stroke-width="4"/><circle cx="110" cy="189" r="46.5" fill="none" stroke="#888" stroke-width="1"/>
<text x="59" y="166" font-family="Liberation Serif" font-weight="bold" font-size="27" fill="url(#mtxt)" stroke="#7a1a00" stroke-width="1.3" paint-order="stroke" textLength="103" lengthAdjust="spacingAndGlyphs">MAGIC</text>
<text x="104" y="174" font-family="Liberation Serif" font-weight="bold" font-size="8" fill="#fff" stroke="#000" stroke-width="1.2" paint-order="stroke" textLength="57" lengthAdjust="spacingAndGlyphs">The Gathering</text>
<circle cx="110" cy="140" r="7" fill="#d8dcd0" stroke="#555" stroke-width=".8"/>
<circle cx="62" cy="180" r="7" fill="#2a8a2a" stroke="#333" stroke-width=".8"/>
<circle cx="159" cy="180" r="7" fill="#2a4aa0" stroke="#333" stroke-width=".8"/>
<circle cx="81" cy="228" r="7.5" fill="#c82818" stroke="#333" stroke-width=".8"/>
<circle cx="141" cy="229" r="7" fill="#2a2a2a" stroke="#555" stroke-width=".8"/>
<circle cx="110" cy="185" r="2.2" fill="#f0d090"/><circle cx="98" cy="195" r="2.2" fill="#80c040"/><circle cx="124" cy="195" r="2.2" fill="#40a8e0"/><circle cx="102" cy="210" r="2.2" fill="#e04020"/><circle cx="120" cy="210" r="2.2" fill="#503028"/>
<rect x="0" y="230" width="48" height="20" fill="rgba(0,0,0,.45)"/>
<rect x="48" y="230" width="48" height="20" fill="rgba(40,40,40,.78)"/>
<text x="4.5" y="244.5" font-family="Liberation Sans" font-size="13" fill="#fff">Enrique Aguilar</text>
<!-- panel 3 -->
<g clip-path="url(#c3)">
 <rect x="0" y="252" width="224" height="126" fill="url(#p3bg)"/>
 <ellipse cx="200" cy="320" rx="40" ry="70" fill="#e8e8f4" filter="url(#b12)"/>
 <ellipse cx="200" cy="262" rx="25" ry="20" fill="#d0b0e0" filter="url(#b12)"/>
 <ellipse cx="172" cy="288" rx="40" ry="8" fill="#3a3844" filter="url(#b6)"/>
 <ellipse cx="60" cy="320" rx="35" ry="40" fill="#3a4050" filter="url(#b12)"/>
 <ellipse cx="150" cy="335" rx="16" ry="40" fill="#1c2028" opacity=".6" filter="url(#b6)"/><ellipse cx="70" cy="330" rx="30" ry="25" fill="#6a7080" opacity=".6" filter="url(#b12)"/>
 <path d="M88 378C90 358 100 350 112 350C128 350 148 356 158 370L160 378Z" fill="#1c2a48" filter="url(#b1)"/>
 <ellipse cx="112" cy="332" rx="15" ry="19" fill="#dcc4c0" filter="url(#b1)"/>
 <path d="M92 320C90 306 100 302 112 302C124 302 136 306 134 326C130 316 124 312 114 313C104 313 96 316 92 330Z" fill="#141210" filter="url(#b1)"/>
 <circle cx="104" cy="331" r="5" fill="none" stroke="#8a7070" stroke-width="1"/><circle cx="120" cy="331" r="5" fill="none" stroke="#8a7070" stroke-width="1"/>
 <rect x="0" y="356" width="104" height="20" fill="rgba(0,0,0,.45)"/>
 <text x="4.5" y="370.5" font-family="Liberation Sans" font-size="13" fill="#fff">Adrian Camacho</text>
</g>
</svg>
<svg class="a" style="left:1564px;top:76px;z-index:50" width="14" height="21" viewBox="0 0 14 21"><path d="M1 1V16.5L4.8 13L7.8 19.8L10.3 18.7L7.4 12.2H12.3Z" fill="#fff" stroke="#000" stroke-width="1.1" stroke-linejoin="round"/></svg>
</body></html>
